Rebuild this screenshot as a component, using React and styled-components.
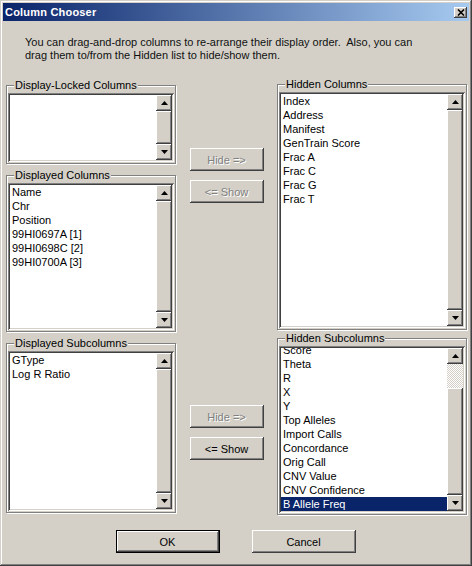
import React from "react";
import styled, { createGlobalStyle } from "styled-components";

const GlobalStyle = createGlobalStyle`
  html, body {
    margin: 0;
    padding: 0;
    background: #d4d0c8;
  }
  body {
    font-family: "Liberation Sans", Arial, sans-serif;
  }
`;

const raised = `
  box-shadow: inset -1px -1px 0 #404040, inset 1px 1px 0 #ffffff,
    inset -2px -2px 0 #808080, inset 2px 2px 0 #d4d0c8;
`;

const lockedCols = [];
const displayedCols = ["Name", "Chr", "Position", "99HI0697A [1]", "99HI0698C [2]", "99HI0700A [3]"];
const hiddenCols = ["Index", "Address", "Manifest", "GenTrain Score", "Frac A", "Frac C", "Frac G", "Frac T"];
const displayedSubs = ["GType", "Log R Ratio"];
const hiddenSubs = [
  "Score", "Theta", "R", "X", "Y", "Top Alleles", "Import Calls", "Concordance",
  "Orig Call", "CNV Value", "CNV Confidence", "B Allele Freq",
];

function Arrow({ down }) {
  return (
    <svg width="7" height="4" viewBox="0 0 7 4">
      <polygon points={down ? "0,0 7,0 3.5,4" : "3.5,0 7,4 0,4"} fill="#000" />
    </svg>
  );
}

function Scrollbar({ track = 0 }) {
  return (
    <ScrollCol>
      <ArrowButton><Arrow /></ArrowButton>
      {track > 0 && <Track $h={track} />}
      <Thumb />
      <ArrowButton><Arrow down /></ArrowButton>
    </ScrollCol>
  );
}

function ListGroup({ label, items, height, offset = 0, selected, track }) {
  return (
    <Group>
      <Legend>{label}</Legend>
      <ListBox $h={height}>
        <Items>
          <ItemsInner $offset={offset}>
            {items.map((it) => (
              <Item key={it} $selected={it === selected}>{it}</Item>
            ))}
          </ItemsInner>
        </Items>
        <Scrollbar track={track} />
      </ListBox>
    </Group>
  );
}

function MoveButtons({ hideEnabled, showEnabled }) {
  return (
    <>
      <Button $disabled={!hideEnabled}>Hide =&gt;</Button>
      <Button $disabled={!showEnabled}>&lt;= Show</Button>
    </>
  );
}

export default function App() {
  return (
    <>
      <GlobalStyle />
      <Window>
        <TitleBar>
          <Title>Column Chooser</Title>
          <CloseButton>
            <svg width="8" height="7" viewBox="0 0 8 7">
              <path d="M1 0.5 L7 6.5 M7 0.5 L1 6.5" stroke="#000" strokeWidth="1.6" />
            </svg>
          </CloseButton>
        </TitleBar>
        <Body>
          <Intro>
            You can drag-and-drop columns to re-arrange their display order.{"  "}Also, you can
            <br />
            drag them to/from the Hidden list to hide/show them.
          </Intro>

          <Section>
            <Column $top={1} $gap={11}>
              <ListGroup label="Display-Locked Columns" items={lockedCols} height={69} />
              <ListGroup label="Displayed Columns" items={displayedCols} height={147} />
            </Column>
            <Middle $top={64}>
              <MoveButtons />
            </Middle>
            <Column>
              <ListGroup label="Hidden Columns" items={hiddenCols} height={236} />
            </Column>
          </Section>

          <Section $mt={6}>
            <Column $top={5}>
              <ListGroup label="Displayed Subcolumns" items={displayedSubs} height={160} />
            </Column>
            <Middle $top={67}>
              <MoveButtons showEnabled />
            </Middle>
            <Column>
              <ListGroup
                label="Hidden Subcolumns"
                items={hiddenSubs}
                height={167}
                offset={-5}
                selected="B Allele Freq"
                track={24}
              />
            </Column>
          </Section>

          <Footer>
            <DialogButton $default>OK</DialogButton>
            <DialogButton>Cancel</DialogButton>
          </Footer>
        </Body>
      </Window>
    </>
  );
}

const Window = styled.div`
  width: 472px;
  height: 566px;
  box-sizing: border-box;
  padding: 3px;
  background: #d4d0c8;
  box-shadow: inset -1px -1px 0 #404040, inset 1px 1px 0 #d4d0c8,
    inset -2px -2px 0 #808080, inset 2px 2px 0 #ffffff;
  display: flex;
  flex-direction: column;
  font-family: "Liberation Sans", Arial, sans-serif;
  font-size: 11px;
  color: #000;
`;

const TitleBar = styled.div`
  height: 18px;
  display: flex;
  align-items: center;
  justify-content: space-between;
  padding: 0 2px 0 2px;
  background: linear-gradient(to right, #0a246a, #a6caf0);
`;

const Title = styled.span`
  color: #fff;
  font-weight: bold;
  font-size: 11px;
  letter-spacing: 0.2px;
`;

const CloseButton = styled.div`
  width: 13px;
  height: 11px;
  display: flex;
  align-items: center;
  justify-content: center;
  background: #d4d0c8;
  ${raised}
`;

const Body = styled.div`
  display: flex;
  flex-direction: column;
  padding: 0 2px 0 3px;
`;

const Intro = styled.p`
  margin: 15px 0 22px 19px;
  line-height: 13px;
  white-space: pre-wrap;
  color: #101010;
`;

const Section = styled.div`
  display: grid;
  grid-template-columns: 170px 101px 190px;
  align-items: start;
  margin-top: ${(p) => p.$mt || 0}px;
`;

const Column = styled.div`
  display: flex;
  flex-direction: column;
  gap: ${(p) => p.$gap || 0}px;
  padding-top: ${(p) => p.$top || 0}px;
`;

const Middle = styled.div`
  display: flex;
  flex-direction: column;
  align-items: center;
  gap: 9px;
  padding-top: ${(p) => p.$top}px;
`;

const Group = styled.div`
  position: relative;
  border: 1px solid #808080;
  box-shadow: 1px 1px 0 #ffffff, inset 1px 1px 0 #ffffff;
  padding: 7px 1px 1px 1px;
`;

const Legend = styled.span`
  position: absolute;
  top: -7px;
  left: 7px;
  padding: 0 1px;
  line-height: 13px;
  background: #d4d0c8;
`;

const ListBox = styled.div`
  display: flex;
  height: ${(p) => p.$h}px;
  box-sizing: border-box;
  padding: 2px;
  background: #fff;
  box-shadow: inset 1px 1px 0 #808080, inset -1px -1px 0 #ffffff,
    inset 2px 2px 0 #404040, inset -2px -2px 0 #d4d0c8;
`;

const Items = styled.div`
  flex: 1;
  overflow: hidden;
`;

const ItemsInner = styled.div`
  margin-top: ${(p) => p.$offset}px;
`;

const Item = styled.div`
  height: 14px;
  line-height: 14px;
  padding-left: 2px;
  white-space: nowrap;
  background: ${(p) => (p.$selected ? "#0a246a" : "transparent")};
  color: ${(p) => (p.$selected ? "#fff" : "#000")};
`;

const ScrollCol = styled.div`
  width: 16px;
  display: flex;
  flex-direction: column;
  background: #d4d0c8;
`;

const ArrowButton = styled.div`
  height: 16px;
  flex-shrink: 0;
  display: flex;
  align-items: center;
  justify-content: center;
  background: #d4d0c8;
  ${raised}
`;

const Track = styled.div`
  height: ${(p) => p.$h}px;
  flex-shrink: 0;
  background-color: #ffffff;
  background-image: repeating-conic-gradient(#d4d0c8 0 25%, #ffffff 0 50%);
  background-size: 2px 2px;
`;

const Thumb = styled.div`
  flex: 1;
  background: #d4d0c8;
  ${raised}
`;

const Button = styled.div`
  width: 74px;
  height: 23px;
  box-sizing: border-box;
  display: flex;
  align-items: center;
  justify-content: center;
  background: #d4d0c8;
  ${raised}
  color: ${(p) => (p.$disabled ? "#808080" : "#000")};
  text-shadow: ${(p) => (p.$disabled ? "1px 1px 0 #ffffff" : "none")};
`;

const Footer = styled.div`
  display: flex;
  justify-content: center;
  gap: 32px;
  margin-top: 15px;
  margin-right: 2px;
`;

const DialogButton = styled.div`
  width: 104px;
  height: 23px;
  box-sizing: border-box;
  display: flex;
  align-items: center;
  justify-content: center;
  background: #d4d0c8;
  box-shadow: ${(p) =>
    p.$default
      ? "inset 0 0 0 1px #000, inset -2px -2px 0 #404040, inset 2px 2px 0 #fff, inset -3px -3px 0 #808080"
      : "inset -1px -1px 0 #404040, inset 1px 1px 0 #fff, inset -2px -2px 0 #808080"};
`;
